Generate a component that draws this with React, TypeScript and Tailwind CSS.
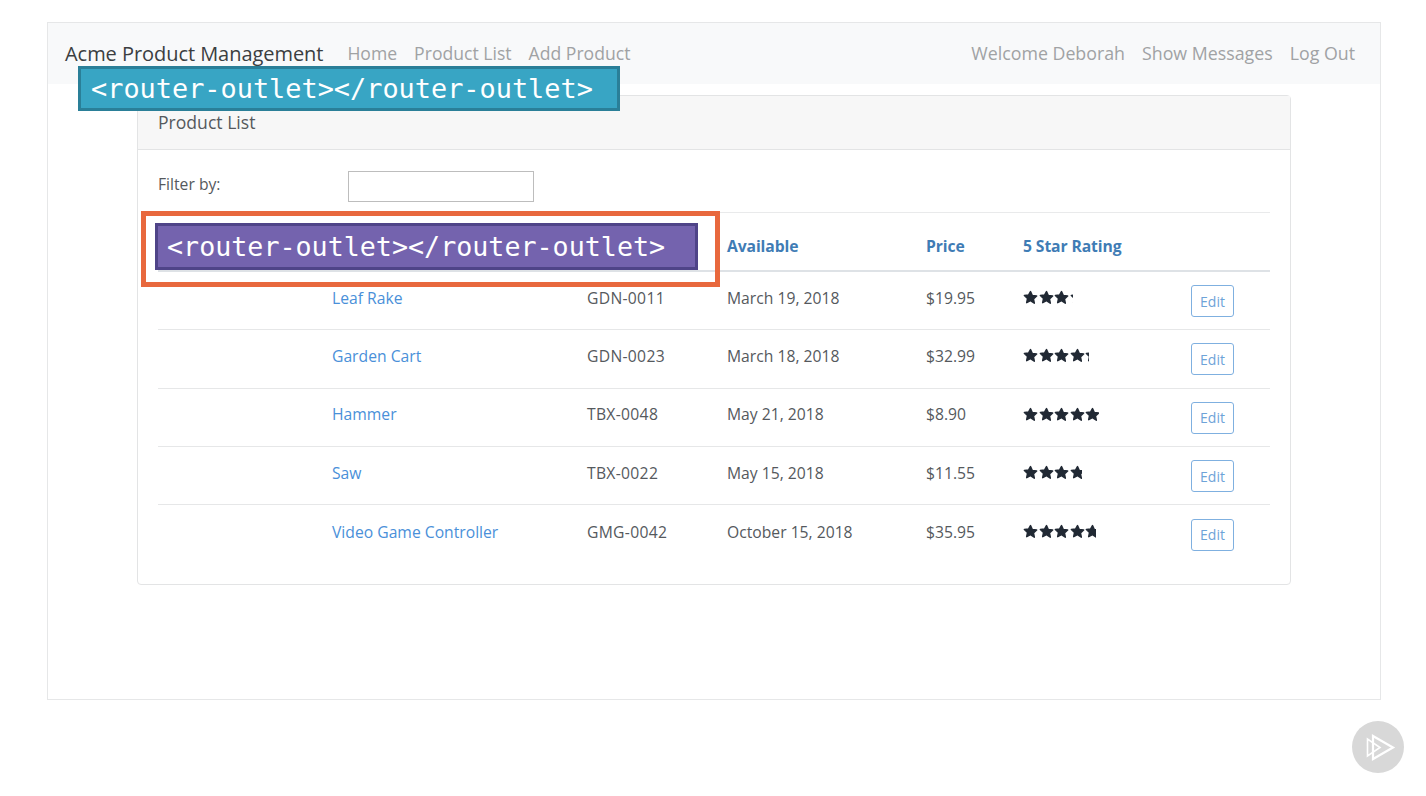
const products = [
  { name: 'Leaf Rake', code: 'GDN-0011', date: 'March 19, 2018', price: '$19.95', stars: 50 },
  { name: 'Garden Cart', code: 'GDN-0023', date: 'March 18, 2018', price: '$32.99', stars: 66 },
  { name: 'Hammer', code: 'TBX-0048', date: 'May 21, 2018', price: '$8.90', stars: 76 },
  { name: 'Saw', code: 'TBX-0022', date: 'May 15, 2018', price: '$11.55', stars: 59 },
  { name: 'Video Game Controller', code: 'GMG-0042', date: 'October 15, 2018', price: '$35.95', stars: 73 },
];

const Star = () => (
  <svg viewBox="0 0 24 24" className="w-[15px] h-[15px] shrink-0 fill-[#212934] stroke-[#212934]" strokeWidth="2.4" strokeLinejoin="round">
    <path d="M12 2.5l2.9 6.3 6.9.9-5.1 4.7 1.4 6.8L12 16.9l-6.1 3.4 1.4-6.8-5.1-4.7 6.9-.9z" />
  </svg>
);

const Stars = ({ width }: { width: number }) => (
  <div className="flex gap-[0.6px] overflow-hidden" style={{ width }}>
    <Star /><Star /><Star /><Star /><Star />
  </div>
);

const PlayBadge = () => (
  <div className="absolute left-[1352px] top-[721px] w-[52px] h-[52px] rounded-full bg-[#d8d8d8] flex items-center justify-center">
    <svg viewBox="0 0 52 52" className="w-[52px] h-[52px] fill-none stroke-white">
      <path d="M21 15L41 26.5 21 38z" strokeWidth="2.2" />
      <path d="M15.5 18v17l12.5-8.5z" strokeWidth="1.6" />
    </svg>
  </div>
);

const OutletLabel = ({ className }: { className: string }) => (
  <div className={`absolute flex items-center font-['DejaVu_Sans_Mono',monospace] text-white border-[3px] ${className}`}>
    &lt;router-outlet&gt;&lt;/router-outlet&gt;
  </div>
);

export default function App() {
  return (
    <div className="relative w-[1426px] h-[796px] overflow-hidden bg-white pt-[22px] pl-[47px] font-['Open_Sans',sans-serif] text-[#55595d]">
      {/* App frame */}
      <div className="w-[1334px] h-[678px] border border-[#e6e7e8]">
        <nav className="h-[61px] bg-[#f8f9fa] flex items-center pl-[17px] pr-[25px] text-[#a0a2a4] text-[17.6px]">
          <span className="text-[#3b3e41] text-[20px] mt-[1px] mr-[24px] tracking-[-0.05px]">Acme Product Management</span>
          <div className="flex gap-[17px]">
            <span>Home</span>
            <span>Product List</span>
            <span>Add Product</span>
          </div>
          <div className="flex gap-[17px] ml-auto text-[17.8px]">
            <span>Welcome Deborah</span>
            <span>Show Messages</span>
            <span>Log Out</span>
          </div>
        </nav>

        {/* Product card */}
        <div className="ml-[89px] mt-[11px] w-[1154px] h-[490px] border border-[#e3e4e5] rounded-[4px]">
          <div className="h-[54px] bg-[#f7f7f7] border-b border-[#e3e4e5] flex items-center pl-[20px] text-[17.6px]">
            Product List
          </div>
          <div className="pl-[20px] pr-[20px]">
            <div className="h-[62px] flex items-start pt-[21px] text-[15.7px]">
              <span className="w-[190px] leading-[24px] mt-[1px]">Filter by:</span>
              <div className="w-[186px] h-[31px] border border-[#bdbdbd] bg-white" />
            </div>

            <div className="grid grid-cols-[174px_255px_140px_199px_97px_168px_1fr] h-[60px] pt-[11px] items-center border-t border-[#e9eaeb] border-b-2 border-b-[#dee2e6] text-[15.7px] font-bold text-[#3f7cb5] tracking-[-0.1px]">
              <span />
              <span />
              <span />
              <span>Available</span>
              <span>Price</span>
              <span className="col-span-2">5 Star Rating</span>
            </div>

            {products.map((p, i) => (
              <div key={p.code} className={`grid grid-cols-[174px_255px_140px_199px_97px_168px_1fr] h-[58.3px] items-center text-[15.7px] ${i < 4 ? 'border-b border-[#e6e7e8]' : ''}`}>
                <span className="col-start-2 text-[#4a90d9] -mt-[4px]">{p.name}</span>
                <span className="-mt-[4px] tracking-[0.3px]">{p.code}</span>
                <span className="-mt-[4px]">{p.date}</span>
                <span className="-mt-[4px]">{p.price}</span>
                <div className="-mt-[6px]"><Stars width={p.stars} /></div>
                <div className="w-[43px] h-[32px] mt-[1px] border-[1.5px] border-[#7fb0e0] rounded-[3px] flex items-center justify-center text-[14px] text-[#6ea3d8]">Edit</div>
              </div>
            ))}
          </div>
        </div>
      </div>

      <OutletLabel className="left-[78px] top-[66px] w-[542px] h-[45px] pl-[10px] pt-[1px] bg-[#38a5c4] border-[#2a7f98] text-[26.9px]" />
      <div className="absolute left-[141px] top-[211px] w-[579px] h-[76px] border-[5px] border-[#e8683d]" />
      <OutletLabel className="left-[155px] top-[223px] w-[543px] h-[47px] pl-[9px] pt-[2px] bg-[#7463ae] border-[#4f4488] text-[26.7px]" />
      <PlayBadge />
    </div>
  );
}
